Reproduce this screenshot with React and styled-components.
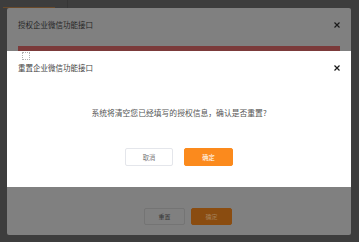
import React from 'react';
import styled, { createGlobalStyle } from 'styled-components';

const Global = createGlobalStyle`
  html, body {
    margin: 0;
    padding: 0;
  }
  body {
    width: 359px;
    height: 242px;
    overflow: hidden;
    background: #3d3d3d;
    font-family: "Noto Sans CJK SC", "Noto Sans", sans-serif;
  }
`

function CloseIcon() {
  return (
    <svg width="8" height="8" viewBox="0 0 8 8">
      <path d="M1.5 1.5 L6.5 6.5 M6.5 1.5 L1.5 6.5" stroke="#1a1a1a" strokeWidth="1.2" />
    </svg>
  )
}

function App() {
  return (
    <>
      <Global />
      <Page>
        <TopBar>
          <ActiveTab />
          <Divider />
        </TopBar>
        <Dialog>
          <Header>
            <Title $dim>授权企业微信功能接口</Title>
            <Close><CloseIcon /></Close>
          </Header>
          <Alert />
          <Spacer />
          <Footer>
            <Button $dim>重置</Button>
            <Button $dim $primary>确定</Button>
          </Footer>
        </Dialog>

        <Modal>
          <Handle />
          <Header $inner>
            <Title>重置企业微信功能接口</Title>
            <Close><CloseIcon /></Close>
          </Header>
          <Message>系统将清空您已经填写的授权信息，确认是否重置?</Message>
          <Actions>
            <Button $large>取消</Button>
            <Button $large $primary>确定</Button>
          </Actions>
        </Modal>
      </Page>
    </>
  )
}

const Page = styled.div`
  position: relative;
  width: 359px;
  height: 242px;
  padding: 0 8px 0 7px;
  box-sizing: border-box;
`

const TopBar = styled.div`
  height: 8px;
  position: relative;
  display: flex;
  align-items: flex-end;
`

const ActiveTab = styled.div`
  width: 52px;
  height: 1px;
  margin-left: -4px;
  background: #6a4a2a;
`

const Divider = styled.div`
  width: 1px;
  height: 8px;
  margin-left: 12px;
  background: #363636;
`

const Dialog = styled.div`
  width: 344px;
  height: 227px;
  background: #808080;
  border-radius: 2px;
  display: flex;
  flex-direction: column;
`

const Header = styled.div`
  display: flex;
  align-items: center;
  justify-content: space-between;
  height: ${p => p.$inner ? '10px' : '34px'};
  margin-top: ${p => p.$inner ? '3px' : '0'};
  padding: 0 10px 0 11px;
`

const Title = styled.div`
  font-size: 7.5px;
  line-height: 10px;
  color: ${p => p.$dim ? '#262626' : '#444'};
`

const Close = styled.div`
  width: 8px;
  height: 8px;
  display: flex;
`

const Alert = styled.div`
  margin: 4px 11px 0;
  height: 30px;
  background: #7b3a3a;
`

const Spacer = styled.div`
  flex: 1;
`

const Footer = styled.div`
  display: flex;
  justify-content: center;
  gap: 6px;
  padding: 0 0 10px 18px;
`

const Button = styled.div`
  box-sizing: border-box;
  width: ${p => p.$large ? (p.$primary ? '49px' : '48px') : '41px'};
  height: ${p => p.$large ? '18px' : '17px'};
  border-radius: 2px;
  display: flex;
  align-items: center;
  justify-content: center;
  font-size: ${p => p.$large ? '6.3px' : '6px'};
  border: 1px solid ${p => p.$primary
    ? (p.$dim ? '#8a4c10' : '#fb8a1d')
    : (p.$dim ? '#747474' : '#e4e6eb')};
  background: ${p => p.$primary
    ? (p.$dim ? '#8a4c10' : '#fb8a1d')
    : (p.$dim ? '#808080' : '#fff')};
  color: ${p => p.$primary
    ? (p.$dim ? '#a4805a' : '#fff')
    : (p.$dim ? '#333' : '#777')};
`

const Modal = styled.div`
  position: absolute;
  top: 51px;
  left: 7px;
  width: 344px;
  height: 136px;
  background: #fff;
  display: flex;
  flex-direction: column;
`

const Handle = styled.div`
  box-sizing: border-box;
  width: 8px;
  height: 8px;
  margin: 1px 0 0 15px;
  border: 1px dotted #b0b0b0;
`

const Message = styled.div`
  margin-top: 35px;
  text-align: center;
  font-size: 7.8px;
  line-height: 10px;
  color: #555;
`

const Actions = styled.div`
  display: flex;
  justify-content: center;
  gap: 11px;
  margin-top: 30px;
`

export default App;
